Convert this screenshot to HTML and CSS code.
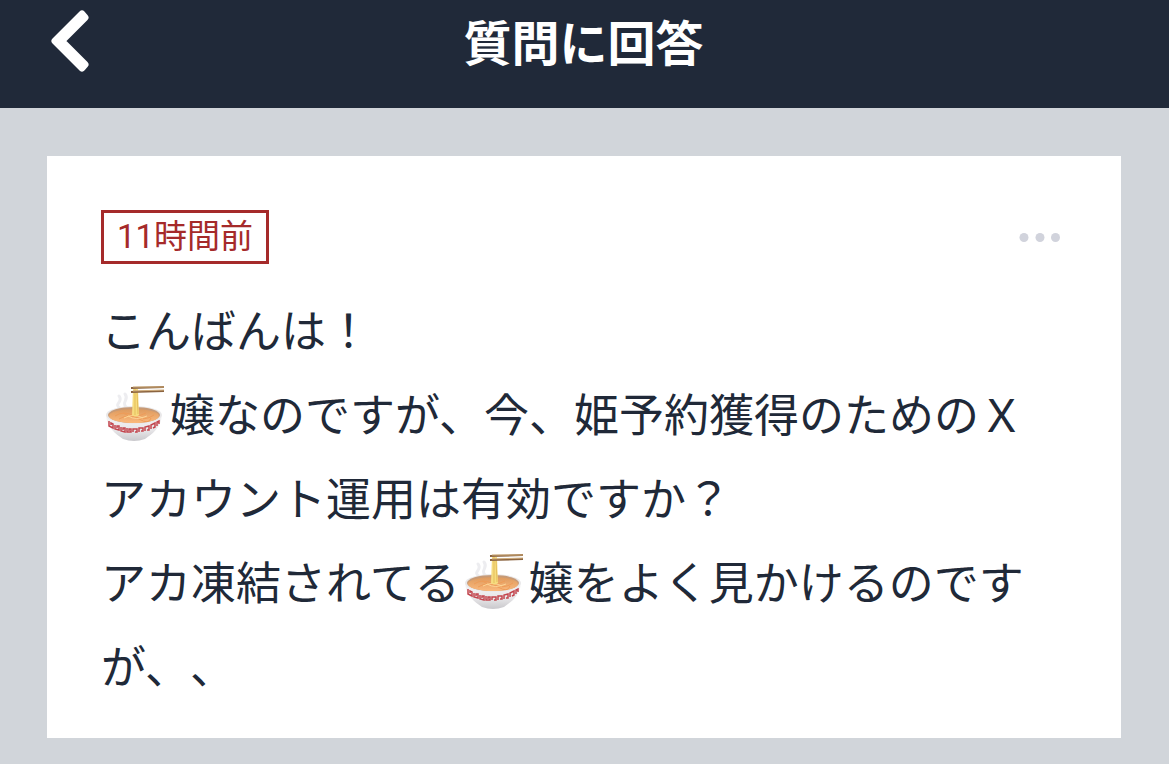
FILE: index.html
```html
<!DOCTYPE html>
<html lang="ja">
<head>
  <meta charset="UTF-8" />
  <meta name="viewport" content="width=device-width, initial-scale=1" />
  <title>質問に回答</title>
  <link rel="stylesheet" href="styles.css">
</head>
<body>

  <header class="header">
    <button class="back" type="button" aria-label="戻る">
      <svg width="40" height="64" viewBox="0 0 40 64" aria-hidden="true">
        <path d="M5 31 L32 4 L35 7.500 L11.500 31 L35 54.500 L32 58Z" fill="#fff" stroke="#fff" stroke-width="7" stroke-linejoin="round" />
      </svg>
    </button>
    <h1 class="title">質問に回答</h1>
  </header>

  <!-- shared ramen drawing -->
  <svg class="defs" aria-hidden="true">
    <defs>
      <linearGradient id="bowl" x1="0" y1="0" x2="0" y2="1">
        <stop offset="0" stop-color="#f7f6f6" />
        <stop offset="0.6" stop-color="#e6e5e7" />
        <stop offset="1" stop-color="#c9c8cc" />
      </linearGradient>
      <linearGradient id="soup" x1="0" y1="0" x2="0" y2="1">
        <stop offset="0" stop-color="#dd9a5e" />
        <stop offset="1" stop-color="#fbb97c" />
      </linearGradient>
    </defs>
    <symbol id="ramen" viewBox="0 0 58 56">
      <path d="M14 22 C7 18 18 16 13 10 M21 22 C14 16 24 14 19 8" fill="none" stroke="#ededf0" stroke-width="3" stroke-linecap="round" />
      <path d="M0 29 C1 42 10 48 17 53 Q28 57 39 53 C46 48 55 42 56 29Z" fill="url(#bowl)" />
      <ellipse cx="28" cy="29" rx="28" ry="9" fill="#e9e8e9" />
      <ellipse cx="28" cy="29" rx="26" ry="8" fill="#c79a76" />
      <ellipse cx="28" cy="30" rx="25" ry="7" fill="url(#soup)" />
      <path d="M9 30 Q18 24 28 30 T48 29 M13 33 Q23 27 33 33 T45 32 M17 27 Q27 34 40 27" fill="none" stroke="#ee9c58" stroke-width="1" />
      <path d="M18 32 Q27 27 37 32 M22 30 Q30 35 41 30" fill="none" stroke="#fdd596" stroke-width="1" />
      <path d="M27 3 H32 L33 29 Q29 32 26 29Z" fill="#f6dc80" />
      <path d="M29 3 V29 M31 5 L32 28" fill="none" stroke="#e5bf5b" stroke-width="1" />
      <path d="M25 2 L58 1 M25 6 L58 5" stroke="#8b6440" stroke-width="2" />
      <path d="M27 1 H58 M27 5 L58 4" stroke="#d1ad7b" stroke-width="1" />
      <path d="M3 35 V40 L7 42 V38 L5 37 V39 M9 39 V43 L13 44 V40 L11 40 V42 M15 41 V45 L19 46 V42 H17 V44 M21 42 V46 H25 V43 H23 V45 M27 46 V43 H31 V46 H29 M33 46 V42 L37 42 V45 H35 M39 45 V41 L43 40 V44 L41 44 M45 43 V39 L49 37 V41 L47 42 M51 40 V36 L53 35 V38" fill="none" stroke="#c3454e" stroke-width="1.500" />
    </symbol>
  </svg>

  <main class="main">
    <article class="card">
      <div class="card-head">
        <time class="time">11時間前</time>
        <button class="more" type="button" aria-label="メニュー">
          <svg width="42" height="10" viewBox="0 0 42 10" aria-hidden="true">
            <circle cx="5" cy="5.500" r="4.500" />
            <circle cx="21" cy="5.500" r="4.500" />
            <circle cx="36.500" cy="5.500" r="4.500" />
          </svg>
        </button>
      </div>
      <p class="question">こんばんは！<br><svg class="emoji" role="img" aria-label="ラーメン"><use href="#ramen" /></svg>嬢なのですが、今、姫予約獲得のためのＸアカウント運用は有効ですか？<br>アカ凍結されてる<svg class="emoji" role="img" aria-label="ラーメン"><use href="#ramen" /></svg>嬢をよく見かけるのですが、、</p>
    </article>
  </main>

</body>
</html>
```
FILE: styles.css
```css
* {
  box-sizing: border-box;
}
body {
  margin: 0;
  background: #d1d5da;
  color: #202938;
  font-family: "Noto Sans CJK JP", sans-serif;
}
button {
  display: flex;
  padding: 0;
  border: none;
  background: none;
  cursor: pointer;
}
.header {
  display: grid;
  grid-template-columns: 40px 1fr 40px;
  align-items: start;
  height: 108px;
  padding: 10px 52px 10px 50px;
  background: #202939;
}
.title {
  margin: 0;
  color: #fff;
  font-size: 48px;
  font-weight: 700;
  line-height: 60px;
  text-align: center;
}
.defs {
  display: block;
  width: 0;
  height: 0;
}
.main {
  padding: 48px 48px 26px 47px;
}
.card {
  padding: 54px 54px 31px;
  background: #fff;
}
.card-head {
  display: flex;
  align-items: center;
  justify-content: space-between;
  margin-bottom: 23px;
}
.time {
  padding: 0 13px;
  border: 3px solid #a52a2a;
  color: #a52a2a;
  font-family: Roboto, "Noto Sans CJK JP", sans-serif;
  font-size: 33px;
  line-height: 48px;
}
.more {
  margin-right: 6px;
  fill: #d1d3dc;
}
.question {
  margin: 0;
  font-size: 45px;
  line-height: 84px;
  text-spacing-trim: space-all;
}
.emoji {
  width: 58px;
  height: 56px;
  margin: 0 6px 0 5px;
  vertical-align: -10px;
}
```
